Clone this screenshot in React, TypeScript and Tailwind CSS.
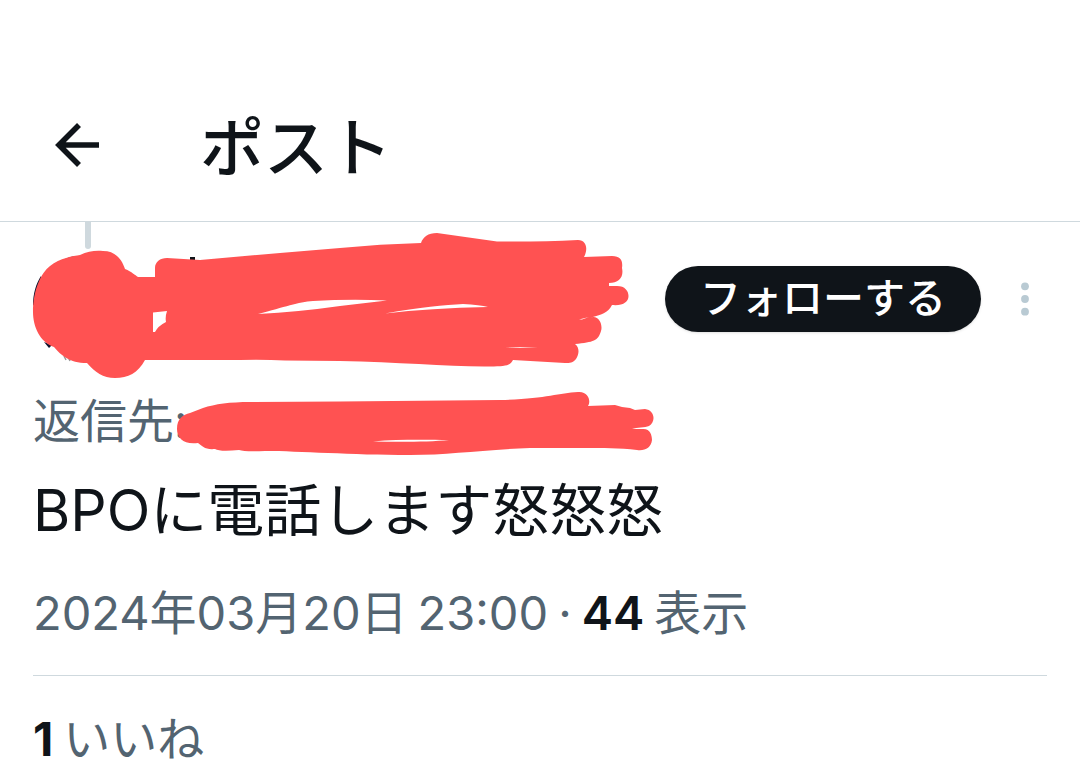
function BackArrow() {
  return (
    <svg viewBox="0 0 46 46" className="size-[46px]" fill="none" stroke="currentColor" strokeWidth="5.6" aria-hidden="true">
      <path d="M25 3 5 23l20 20M5 23h40" />
    </svg>
  );
}

function MoreDots() {
  return (
    <svg viewBox="0 0 10 34" className="h-[34px] w-[10px]" fill="currentColor" aria-hidden="true">
      <circle cx="5" cy="4.3" r="3.9" />
      <circle cx="5" cy="17" r="3.9" />
      <circle cx="5" cy="29.7" r="3.9" />
    </svg>
  );
}

function Scribbles() {
  return (
    <svg
      viewBox="0 222 680 240"
      className="pointer-events-none absolute top-0 left-0 h-[240px] w-[680px]"
      aria-hidden="true"
    >
      <path d="M62 261C67 257 74 256 80 256L76 262ZM33 306C33 293 36 284 41 276L44 290ZM44 342 49 348 52 345Z" fill="#10142e" />
      <path d="M190 257h5v6h-5z" fill="#0f1419" />
      <path d="M64 356l2 4M68 357l2 4" stroke="#9a9a9a" strokeWidth="1.5" />
      <path
        fill="#ff5252"
        fillRule="evenodd"
        d="M155 277V268C155 262 160 258 167 258L200 260 280 253 340 248Q380 244 421 243C423 237 428 233 437 233L497 241.500Q540 242 578 240C587 240 588 250 584 257L612 256C621 256 623 261 622 268 624 277 619 283 609 283V286H617C625 286 628.500 291 628.500 296 628.500 302 623 306 612 305 608 313 601 315 591 317.500 599 315 603 325 601 331 598 341 594 342 575 344 580 348 579 354 576 359 573 363 570 363 565 363L513 360C510 366 505 366 490 366.500 450 367 400 362 340 361L285 360.500Q265 359.500 240 360H145C138 373 128 378 115 378 103 378 95 372 87 363 69 363 61 355 54 347 40 342 33 327 33 312 33 290 41 273 50 266 60 258 73 256 80 255 88 251 95 250.500 103 251 116 251 122 260 125 269 132 272 135 275 138 277ZM153 312.500 167 311Q165 317 166 322 158 326 155 332H153ZM258 314C285 307 298 302 313 301Q350 299 387 300.500L340 306Q298 312 258 314ZM385 313.500C420 307 445 305 463 304Q480 305 488 307 430 308 385 313.500ZM505 347 538 347.500 520 348ZM579 319.500 589 317 582 319.500Z"
      />
      <path
        fill="#ff5252"
        fillRule="evenodd"
        d="M177 429C177 418 183 415 190 413L203 408C215 404 230 402 250 402L340 401.500 500 400C545 399 558 393 578 392 589 391 591 402 588 406L615 405 622 407 630 408 635 410 645 409C655 410 656 422 649 426 645 428 637 427 632 429H642C650 428 652 435 652 440 651 448 645 451 637 450 620 448 600 448 590 448L530 448C480 450 450 455 410 455 350 455 300 451 265 451Q245 452 239 450 220 452 215 449C205 450 202 446 198 443 184 445 177 438 177 429ZM373 441.500C400 439 430 440 449 440 430 442 400 442 373 441.500Z"
      />
    </svg>
  );
}

export default function App() {
  return (
    <div className="min-h-screen overflow-hidden bg-white font-['Inter','Noto_Sans_CJK_JP',sans-serif] text-[#0f1419]">
      <header className="flex items-center gap-[100px] border-b border-[#cfd9de] pt-[74px] pl-[54px]">
        <button type="button" aria-label="戻る" className="pb-[5px]">
          <BackArrow />
        </button>
        <h1 className="text-[64px] leading-[147px] font-medium">ポスト</h1>
      </header>

      <article className="relative px-[33px]">
        <div className="ml-[52px] h-[27px] w-[6px] rounded-b-full bg-[#cfd9de]" aria-hidden="true" />
        <div className="mt-[17px] flex items-center justify-end gap-[39px] pr-[17px]">
          <button
            type="button"
            className="rounded-full bg-[#0f1419] px-[35px] pb-[2px] text-[41px] leading-[64px] font-medium text-white shadow"
          >
            フォローする
          </button>
          <button type="button" aria-label="その他" className="text-[#b9cad3]">
            <MoreDots />
          </button>
        </div>

        <p className="mt-[56px] text-[47px] leading-[66px] text-[#536471]">返信先:</p>
        <p className="mt-[11px] text-[57px] leading-[92px]">BPOに電話します怒怒怒</p>
        <p className="mt-[21px] flex gap-[10px] border-b border-[#cfd9de] pb-[27px] text-[47px] leading-[70px] text-[#536471]">
          <span>2024年03月20日</span>
          <span>23:00</span>
          <span>·</span>
          <span className="font-semibold text-[#0f1419]">44</span>
          <span>表示</span>
        </p>
        <p className="mt-[32px] flex gap-[10px] text-[47px] leading-[61px] text-[#536471]">
          <span className="font-bold text-[#0f1419]">1</span>
          <span>いいね</span>
        </p>
        <Scribbles />
      </article>
    </div>
  );
}
